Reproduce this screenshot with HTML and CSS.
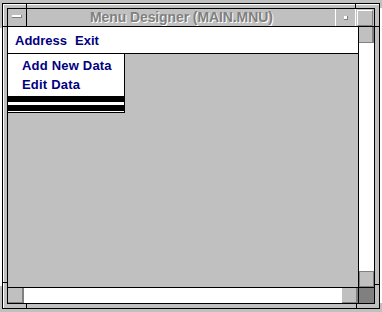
FILE: index.html
```html
<!DOCTYPE html>
<html>
<head>
<meta charset="utf-8">
<link rel="stylesheet" href="styles.css">
</head>
<body>
<div class="behind behind-left"></div>
<div class="behind behind-right"></div>
<div class="window">
  <div class="inner">
    <div class="titlebar">
      <div class="sysmenu"><span class="sysbar"></span></div>
      <div class="title">Menu Designer (MAIN.MNU)</div>
      <div class="btn-min"><span class="dot"></span></div>
      <div class="btn-max"><span class="raised"></span></div>
    </div>
    <div class="body">
      <div class="main">
        <div class="menubar"><span class="mitem">Address</span><span class="mitem">Exit</span></div>
        <div class="client">
          <div class="dropdown">
            <div class="ditem">Add New Data</div>
            <div class="ditem">Edit Data</div>
            <div class="dbar first"></div>
            <div class="dbar"></div>
          </div>
        </div>
        <div class="hscroll">
          <div class="sbtn"></div>
          <div class="track"></div>
          <div class="sbtn"></div>
        </div>
      </div>
      <div class="vscroll">
        <div class="sbtn vbtn-up"></div>
        <div class="vtrack"></div>
        <div class="sbtn vbtn-down"></div>
        <div class="corner"></div>
      </div>
    </div>
  </div>
  <span class="notch nv" style="left:23px;top:0"></span>
  <span class="notch nv" style="left:352px;top:0"></span>
  <span class="notch nv" style="left:23px;top:300px"></span>
  <span class="notch nv" style="left:353px;top:300px"></span>
  <span class="notch nh" style="left:0;top:22px"></span>
  <span class="notch nh" style="left:0;top:278px"></span>
  <span class="notch nh" style="left:372px;top:22px"></span>
  <span class="notch nh" style="left:372px;top:280px"></span>
</div>
</body>
</html>
```

FILE: styles.css
```css
* { box-sizing: border-box; }
html, body { margin: 0; padding: 0; }
body {
  width: 382px;
  height: 312px;
  background: #c0c0c0;
  position: relative;
  overflow: hidden;
  font-family: "Liberation Sans", Arial, sans-serif;
}
.behind { position: absolute; background: #fff; }
.behind-left { left: 0; top: 28px; width: 2px; height: 258px; }
.behind-right { left: 380px; top: 8px; width: 2px; height: 295px; }

.window {
  position: absolute;
  left: 2px;
  top: 3px;
  width: 378px;
  height: 306px;
  border: 1px solid #000;
  padding: 4px;
  background: #c0c0c0;
  box-shadow: inset 1px 1px 0 #fff;
}
.inner {
  width: 368px;
  height: 296px;
  border: 1px solid #000;
  display: flex;
  flex-direction: column;
}
.titlebar {
  height: 18px;
  border-bottom: 1px solid #000;
  display: flex;
  background: #c0c0c0;
}
.sysmenu {
  width: 19px;
  border-right: 1px solid #000;
  display: flex;
  align-items: flex-start;
  justify-content: flex-start;
  padding: 6px 0 0 4px;
}
.sysbar {
  display: block;
  width: 9px;
  height: 3px;
  background: #fff;
  border-bottom: 1px solid #808080;
  box-shadow: 1px 0 0 #808080;
}
.title {
  flex: 1;
  font-weight: bold;
  font-size: 14px;
  color: #808080;
  text-shadow: 1px 1px 0 #fff;
  line-height: 17px;
  padding-left: 63px;
  border-right: 1px solid #fff;
  letter-spacing: -0.1px;
}
.btn-min {
  width: 20px;
  border-right: 1px solid #fff;
  padding: 7px 0 0 8px;
}
.dot {
  display: block;
  width: 4px;
  height: 4px;
  background: #fff;
  border-right: 1px solid #808080;
  border-bottom: 1px solid #808080;
}
.btn-max {
  width: 18px;
  padding: 1px 1px 0 1px;
}
.raised {
  display: block;
  width: 16px;
  height: 16px;
  border-top: 1px solid #fff;
  border-left: 1px solid #fff;
  border-right: 1px solid #808080;
  border-bottom: 1px solid #808080;
}
.body {
  flex: 1;
  display: flex;
}
.main {
  width: 350px;
  display: flex;
  flex-direction: column;
}
.menubar {
  height: 27px;
  background: #fff;
  border-bottom: 1px solid #000;
  display: flex;
  gap: 8px;
  padding-left: 7px;
  font-weight: bold;
  font-size: 13px;
  color: #000080;
  line-height: 18px;
  padding-top: 5px;
}
.client {
  flex: 1;
  background: #c0c0c0;
  position: relative;
}
.dropdown {
  position: absolute;
  left: 0;
  top: 0;
  width: 117px;
  background: #fff;
  border-right: 1px solid #000;
  border-bottom: 1px solid #000;
  padding-top: 3px;
  padding-bottom: 1px;
}
.ditem {
  height: 19px;
  line-height: 18px;
  padding-left: 14px;
  font-weight: bold;
  font-size: 13px;
  letter-spacing: 0.2px;
  color: #000080;
}
.dbar { height: 6px; background: #000; margin-top: 3px; }
.dbar.first { margin-top: 1px; }
.hscroll {
  height: 16px;
  border-top: 1px solid #000;
  display: flex;
}
.hscroll .sbtn { width: 16px; }
.track { flex: 1; background: #fff; }
.sbtn {
  background: #c0c0c0;
  border-right: 2px solid #808080;
  border-bottom: 1px solid #808080;
}
.vscroll {
  width: 16px;
  border-left: 1px solid #000;
  display: flex;
  flex-direction: column;
}
.vbtn-up { height: 16px; }
.vtrack { flex: 1; background: #fff; }
.vbtn-down { height: 16px; border: 1px solid #808080; }
.corner {
  height: 16px;
  border-top: 1px solid #000;
  background: #808080;
}
.notch { position: absolute; background: #000; }
.nv { width: 1px; height: 4px; }
.nh { width: 4px; height: 1px; }
```
